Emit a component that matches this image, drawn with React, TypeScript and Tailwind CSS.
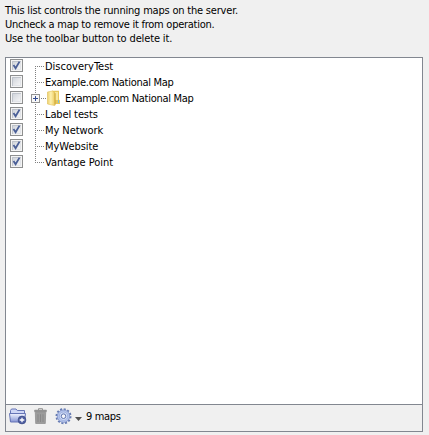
const intro = [
  { text: 'This list controls the running maps on the server.', track: 'tracking-[-0.2px]' },
  { text: 'Uncheck a map to remove it from operation.', track: 'tracking-[-0.26px]' },
  { text: 'Use the toolbar button to delete it.', track: 'tracking-[-0.14px]' },
];

type MapRow = { name: string; checked: boolean; folder?: boolean; track: string };

const rows: MapRow[] = [
  { name: 'DiscoveryTest', checked: true, track: 'tracking-[0px]' },
  { name: 'Example.com National Map', checked: false, track: 'tracking-[-0.3px]' },
  { name: 'Example.com National Map', checked: false, folder: true, track: 'tracking-[-0.3px]' },
  { name: 'Label tests', checked: true, track: 'tracking-[-0.12px]' },
  { name: 'My Network', checked: true, track: 'tracking-[-0.07px]' },
  { name: 'MyWebsite', checked: true, track: 'tracking-[-0.05px]' },
  { name: 'Vantage Point', checked: true, track: 'tracking-[0px]' },
];

function Checkbox({ checked }: { checked: boolean }) {
  return (
    <svg width="13" height="13" viewBox="0 0 13 13" className="mt-px shrink-0">
      <defs>
        <linearGradient id="box" x1="0" y1="0" x2="1" y2="1">
          <stop offset="0" stopColor="#cdd1d8" />
          <stop offset="1" stopColor="#f8f8f8" />
        </linearGradient>
      </defs>
      <rect x=".5" y=".5" width="12" height="12" fill="#f4f4f4" stroke="#8e8f8f" />
      <rect x="2" y="2" width="9" height="9" fill="url(#box)" />
      <path d="M2.5 11 V2.5 H11" fill="none" stroke="#b9bec6" strokeOpacity=".8" />
      <path d="M3 10.5 H10.5 V3" fill="none" stroke="#e2e4e8" />
      {checked && <path d="M3.5 6 L5.6 9.2 L9.5 2.6" fill="none" stroke="#4a5f97" strokeWidth="1.8" />}
    </svg>
  );
}

function Branch({ row, last, first }: { row: MapRow; last: boolean; first: boolean }) {
  return (
    <svg width="10" height="16" viewBox="0 0 10 16" className="ml-[8px] shrink-0 overflow-visible" shapeRendering="crispEdges">
      <path d={`M4.5 ${first ? 8 : 0} V${last ? 9 : 16}`} stroke="#808080" strokeDasharray="1 1" />
      <path d={row.folder ? 'M10 8.5 H15' : 'M4 8.5 H14'} stroke="#808080" strokeDasharray="1 1" />
      {row.folder && (
        <>
          <rect x=".5" y="4.5" width="8" height="8" fill="#f8f8f8" stroke="#919191" />
          <path d="M2 8.5 H7 M4.5 6 V11" stroke="#344c91" />
        </>
      )}
    </svg>
  );
}

function Folder() {
  return (
    <svg width="16" height="16" viewBox="0 0 16 16" className="ml-[5px] shrink-0 overflow-visible">
      <defs>
        <linearGradient id="cover" x1="0" y1="0" x2="1" y2="0">
          <stop offset="0" stopColor="#ecd06f" />
          <stop offset=".45" stopColor="#fdf0ae" />
          <stop offset="1" stopColor="#eccb60" />
        </linearGradient>
      </defs>
      <path d="M6 .8 H13 V9.5 L14 10.5 V14 H6Z" fill="#e8c75b" />
      <path d="M9 2 H12 V10 H9Z" fill="#f8e69a" />
      <path d="M1.5 2 L6.5 1 L8.8 3 V15.6 L1.5 14Z" fill="url(#cover)" stroke="#e0c057" strokeWidth=".6" />
      <path d="M9.1 3.2 V14.8" stroke="#c9a53b" strokeWidth=".9" />
      <path d="M12.5 10 V13" stroke="#79bfd9" />
    </svg>
  );
}

function AddFolder() {
  return (
    <svg width="18" height="17" viewBox="0 0 18 17" className="overflow-visible">
      <defs>
        <linearGradient id="blue" x1="0" y1="0" x2="0" y2="1">
          <stop offset="0" stopColor="#f1f4ff" />
          <stop offset="1" stopColor="#8594d4" />
        </linearGradient>
      </defs>
      <path d="M1.5 13 V2.5 L2.5 1 H7 L8.3 2.5 H15.5 V13Z" fill="#cfd7f6" stroke="#6675b6" />
      <path d="M.5 5.5 H16.5 L15.5 14 H1.5Z" fill="url(#blue)" stroke="#6675b6" />
      <circle cx="13" cy="12" r="3.9" fill="#5060a3" stroke="#394783" strokeWidth=".7" />
      <path d="M10.7 12 H15.3 M13 9.7 V14.3" stroke="#fff" strokeWidth="1.3" />
    </svg>
  );
}

function Trash() {
  return (
    <svg width="14" height="17" viewBox="0 0 14 17">
      <path d="M4.5 2.5 V.7 H8.5 V2.5" fill="none" stroke="#929292" />
      <rect x=".3" y="1.8" width="12.4" height="2.4" rx=".5" fill="#929292" />
      <path d="M1.3 4.5 H11.7 L11.3 15.5 H1.7Z" fill="#9c9c9c" stroke="#898989" strokeWidth=".7" />
      <path d="M4 6.3 V14 M6.5 6.3 V14 M9 6.3 V14" stroke="#888" />
    </svg>
  );
}

function Gear() {
  return (
    <svg width="17" height="17" viewBox="0 0 17 17">
      <circle cx="8.5" cy="8.2" r="7" fill="none" stroke="#667bb2" strokeWidth="2" strokeDasharray="2.1 1.565" />
      <circle cx="8.5" cy="8.2" r="6.2" fill="#b4c4ec" stroke="#7d91c7" strokeWidth=".8" />
      <circle cx="8.5" cy="8.2" r="4.2" fill="#d0dcf7" stroke="#93a6d6" strokeWidth=".7" />
      <circle cx="8.5" cy="8.2" r="2.3" fill="#f4f5f9" stroke="#6074ad" />
    </svg>
  );
}

export default function App() {
  return (
    <main className="flex h-[435px] w-[429px] flex-col bg-[#f0f0f0] pl-[5px] font-['DejaVu_Sans_Condensed','DejaVu_Sans',sans-serif] text-[11px] text-black">
      <header className="h-[57px] pt-[4px] leading-[14px]">
        {intro.map((line) => (
          <p key={line.text} className={`whitespace-nowrap ${line.track}`}>{line.text}</p>
        ))}
      </header>
      <section className="flex h-[375px] w-[418px] flex-col border border-[#828790] bg-white">
        <ul className="flex-1 pl-[4px]">
          {rows.map((row, i) => (
            <li key={i} className="flex h-4 whitespace-nowrap leading-4">
              <Checkbox checked={row.checked} />
              <Branch row={row} first={i === 0} last={i === rows.length - 1} />
              {row.folder && <Folder />}
              <span className={`pt-px ${row.folder ? 'ml-[3px]' : 'ml-[4px]'} ${row.track}`}>{row.name}</span>
            </li>
          ))}
        </ul>
        <footer className="flex h-[27px] items-center border-t border-[#828790] bg-[#f0f0f0] pb-[4px] pl-[3px]">
          <AddFolder />
          <span className="ml-[7px]"><Trash /></span>
          <span className="ml-[7px]"><Gear /></span>
          <svg width="7" height="4" className="ml-[3px] mt-[6px]"><path d="M0 0 H7 L3.5 4Z" fill="#505050" /></svg>
          <span className="ml-[4px] pt-[2px] tracking-[-0.35px]">9 maps</span>
        </footer>
      </section>
    </main>
  );
}
